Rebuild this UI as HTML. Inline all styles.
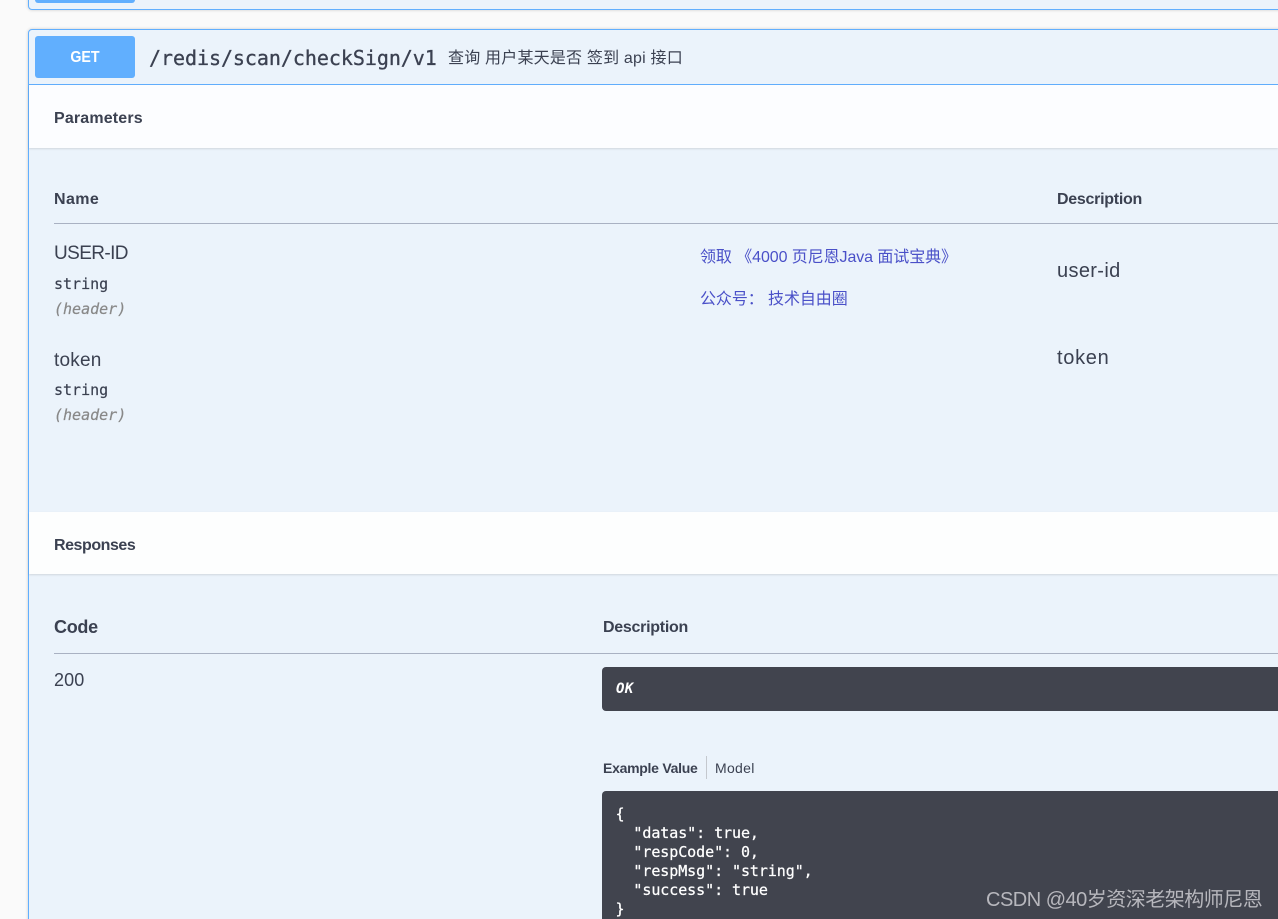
<!DOCTYPE html>
<html lang="zh">
<head>
<meta charset="utf-8">
<title>GET /redis/scan/checkSign/v1</title>
<style>
html,body{margin:0;padding:0;width:1278px;height:919px;overflow:hidden;background:#fafafa}
#p{position:relative;width:1278px;height:919px;overflow:hidden;background:#fafafa;font-family:"Liberation Sans","Noto Sans CJK SC",sans-serif;color:#3b4151}
#p div,#p span.t{position:absolute}
.t{white-space:pre;line-height:20px;display:block}
.b{font-weight:700;font-size:16px}
.n{font-size:19px;letter-spacing:-.6px}
.d{font-size:20px}
.m{font-family:"DejaVu Sans Mono","Liberation Mono",monospace;font-size:15px;letter-spacing:0;-webkit-text-stroke:.2px currentColor}
.lnk{font-size:16px;letter-spacing:-.08px;color:#4a50c8}
</style>
</head>
<body>
<div id="p">
  <div style="left:28px;top:-20px;width:1270px;height:28px;background:#ebf3fb;border:1px solid #61affe;border-radius:4px;box-shadow:0 0 3px rgba(0,0,0,.19)"></div>
  <div style="left:35px;top:-20px;width:100px;height:23px;background:#61affe;border-radius:3px"></div>

  <div style="left:28px;top:29px;width:1270px;height:920px;background:#ebf3fb;border:1px solid #61affe;border-radius:4px;box-shadow:0 0 3px rgba(0,0,0,.19)"></div>
  <div style="left:35px;top:36px;width:100px;height:42px;background:#61affe;border-radius:3px"></div>
  <span class="t" style="left:35px;width:100px;text-align:center;top:48px;color:#fff;font-weight:700;font-size:16px;transform:scaleX(.89)">GET</span>
  <span class="t" style="left:149px;top:48px;font-family:'DejaVu Sans Mono','Liberation Mono',monospace;font-size:20px;letter-spacing:-.05px;color:#3b4151;-webkit-text-stroke:.3px #3b4151">/redis/scan/checkSign/v1</span>
  <span class="t" style="left:448px;top:49px;font-size:16px;letter-spacing:.2px">查询 用户某天是否 签到 api 接口</span>

  <div style="left:29px;top:84px;width:1249px;height:1px;background:#61affe"></div>
  <div style="left:29px;top:85px;width:1249px;height:63px;background:#fcfdff;box-shadow:0 1px 2px rgba(0,0,0,.12)"></div>
  <span class="t b" style="left:54px;top:109px;letter-spacing:.16px">Parameters</span>

  <span class="t b" style="left:54px;top:190px;letter-spacing:.4px">Name</span>
  <span class="t b" style="left:1057px;top:190px;letter-spacing:-.27px">Description</span>
  <div style="left:54px;top:223px;width:1224px;height:1px;background:#a9b1c2"></div>

  <span class="t n" style="left:54px;top:244px">USER-ID</span>
  <span class="t m" style="left:54px;top:274px">string</span>
  <span class="t m" style="left:54px;top:299px;font-style:italic;color:#888">(header)</span>
  <span class="t n" style="left:54px;top:351px;letter-spacing:.2px">token</span>
  <span class="t m" style="left:54px;top:380px">string</span>
  <span class="t m" style="left:54px;top:405px;font-style:italic;color:#888">(header)</span>

  <span class="t lnk" style="left:700px;top:248px">领取 《4000 页尼恩Java 面试宝典》</span>
  <span class="t lnk" style="left:700px;top:290px">公众号： 技术自由圈</span>

  <span class="t d" style="left:1057px;top:261px;letter-spacing:.35px">user-id</span>
  <span class="t d" style="left:1057px;top:348px;letter-spacing:.7px">token</span>

  <div style="left:29px;top:512px;width:1249px;height:62px;background:#fdfefe;box-shadow:0 1px 2px rgba(0,0,0,.12)"></div>
  <span class="t b" style="left:54px;top:536px;letter-spacing:-.45px">Responses</span>

  <span class="t" style="left:54px;top:617px;font-weight:700;font-size:18px;letter-spacing:-.3px">Code</span>
  <span class="t b" style="left:603px;top:618px;letter-spacing:-.27px">Description</span>
  <div style="left:54px;top:653px;width:1224px;height:1px;background:#a9b1c2"></div>
  <span class="t" style="left:54px;top:670px;font-size:18px;letter-spacing:.1px">200</span>

  <div style="left:602px;top:667px;width:690px;height:44px;background:#41444e;border-radius:4px"></div>
  <span class="t" style="left:616px;top:679px;color:#fff;font-family:'DejaVu Sans Mono','Liberation Mono',monospace;font-weight:700;font-style:italic;font-size:14px;letter-spacing:.5px">OK</span>

  <span class="t" style="left:603px;top:758px;font-size:14px;font-weight:700;letter-spacing:-.27px">Example Value</span>
  <div style="left:706px;top:756px;width:1px;height:23px;background:#c4c8ce"></div>
  <span class="t" style="left:715px;top:758px;font-size:14px;letter-spacing:.3px">Model</span>

  <div style="left:602px;top:791px;width:690px;height:140px;background:#41444e;border-radius:4px"></div>
  <span class="t" style="left:615.5px;top:805px;color:#fff;font-family:'DejaVu Sans Mono','Liberation Mono',monospace;font-size:15px;line-height:19px;letter-spacing:-.07px;-webkit-text-stroke:.25px #fff">{
  "datas": true,
  "respCode": 0,
  "respMsg": "string",
  "success": true
}</span>

  <span class="t" style="left:986px;top:890px;font-size:20px;color:rgba(190,190,195,.95);letter-spacing:-.5px">CSDN @40岁资深老架构师尼恩</span>
</div>
</body>
</html>
